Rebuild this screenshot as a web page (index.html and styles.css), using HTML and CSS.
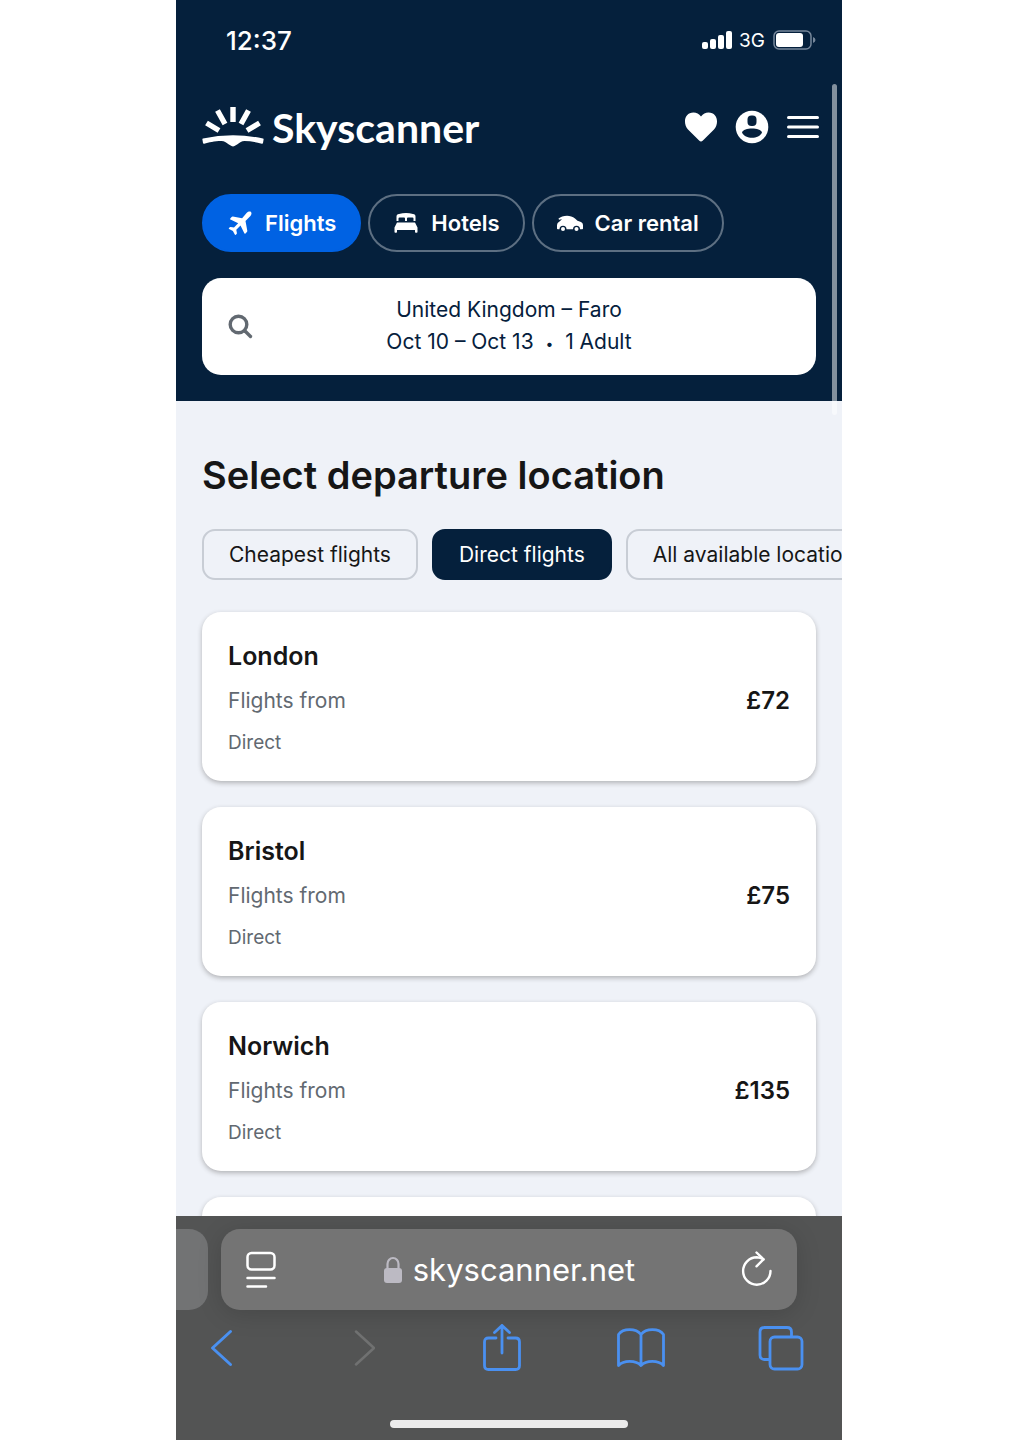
FILE: index.html
```html
<!DOCTYPE html>
<html lang="en">
<head>
    <meta charset="utf-8">
    <meta name="viewport" content="width=device-width, initial-scale=1">
    <title>Skyscanner</title>
    <link rel="stylesheet" href="styles.css">
</head>
<body>
<div class="phone">
    <div class="scroll-thumb"></div>
    <header class="header">
        <div class="status-bar">
            <span class="time">12:37</span>
            <div class="status-icons">
                <svg width="31" height="20" viewBox="0 0 31 20" fill="#fff">
                    <rect x="0" y="12" width="6" height="7" rx="2"/>
                    <rect x="8" y="9" width="6" height="10" rx="2"/>
                    <rect x="16" y="5" width="6" height="14" rx="2"/>
                    <rect x="24" y="1" width="6" height="18" rx="2"/>
                </svg>
                <span class="network">3G</span>
                <svg width="43" height="20" viewBox="0 0 43 20">
                    <rect x="1" y="1" width="37" height="18" rx="5" fill="none" stroke="#76869a" stroke-width="1.5"/>
                    <rect x="3" y="3" width="27" height="14" rx="3" fill="#fff"/>
                    <path d="M40 7q2.5 1 2.5 3T40 13z" fill="#76869a"/>
                </svg>
            </div>
        </div>

        <div class="brand-row">
            <a class="brand" href="#">
                <svg width="62" height="40" viewBox="0 0 62 40">
                    <path d="M31 0V15M15.500 3.500l7.500 13.500M46.500 3.500L39 17M4.500 16l12.500 7.500M57.500 16L45 23.500" stroke="#fff" stroke-width="5.400"/>
                    <path d="M1 31.500Q31 25 61 31.500q.8.200.6 1l-.6 3.500q-.2.900-1.200.700Q50 34 42.500 34c-3 0-4.500 1.500-7 3.200L32.500 39q-1.500.9-3 0l-3-1.800C24 35.500 22.500 34 19.500 34 12 34 7 35.500 2.200 36.700q-1 .2-1.200-.7l-.6-3.500q-.2-.8.6-1z" fill="#fff"/>
                </svg>
                <span class="brand-name">Skyscanner</span>
            </a>
            <div class="actions">
                <button class="icon-button" aria-label="Saved">
                    <svg width="34" height="34" viewBox="0 0 34 34" fill="#fff">
                        <path d="M17 31.500q-1 0-1.900-.9L4 19.500C-1.500 13 .6 2.500 9.500 2.500c3 0 5.500 1.500 7.500 4.100 2-2.600 4.500-4.100 7.500-4.100 8.900 0 11 10.500 5.500 17L18.900 30.600q-.9.900-1.900.9z"/>
                    </svg>
                </button>
                <button class="icon-button" aria-label="Account">
                    <svg width="34" height="34" viewBox="0 0 34 34">
                        <circle cx="17" cy="17" r="16.300" fill="#fff"/>
                        <rect x="12.500" y="5.500" width="9" height="10.500" rx="4" fill="#05203c"/>
                        <path d="M7 22.500c1.500-5.400 18.500-5.400 20 0-3 7-17 7-20 0z" fill="#05203c"/>
                    </svg>
                </button>
                <button class="icon-button" aria-label="Menu">
                    <svg width="34" height="34" viewBox="0 0 34 34" stroke="#fff" stroke-width="3" stroke-linecap="round">
                        <path d="M2.500 7.500h29M2.500 17h29M2.500 26.500h29"/>
                    </svg>
                </button>
            </div>
        </div>

        <nav class="pills">
            <a class="pill active" href="#">
                <svg width="26" height="26" viewBox="0 0 26 26" fill="#fff">
                    <path d="M24 2c1 1 .4 3-.8 4.200L18.500 11l1.800 9.800q.1.700-.4 1.200l-1.400 1.400q-.8.700-1.300-.3l-3.700-7.600-4.200 4.200.6 3.300q.1.500-.3.900l-.8.800q-.6.500-1-.2L5.900 20.900l-3.800-1.900q-.7-.4-.1-1l.8-.8q.4-.4.900-.3l3.300.6 4.200-4.200-7.700-3.700q-1-.5-.2-1.200l1.300-1.400q.6-.5 1.200-.4l9.300 1.700L19.800 2.800C21 1.600 23 1 24 2z"/>
                </svg>
                Flights
            </a>
            <a class="pill" href="#">
                <svg width="26" height="26" viewBox="0 0 26 26" fill="#fff">
                    <path d="M3.500 11V6.500Q3.500 4 6 4q7-1.800 14 0 2.500 0 2.500 2.500V11h-2V8.500q0-1-1-1h-4.500q-1 0-1 1V11h-2V8.500q0-1-1-1H6.500q-1 0-1 1V11z"/>
                    <path d="M4 12.500h18l2.500 5V22q0 .8-.8.800h-.9q-.8 0-.8-.8v-2H4v2q0 .8-.8.800h-.9q-.8 0-.8-.8v-4.500z"/>
                </svg>
                Hotels
            </a>
            <a class="pill" href="#">
                <svg width="26" height="26" viewBox="0 0 26 26" fill="#fff">
                    <path d="M1.500 8.500C5 5.500 13 4 18 8.500l2.500 2.300 3.500 1.200q2 .8 2 3v3.500q0 .7-.7.700H23a3.500 3.500 0 0 0-7 0H9.500a3.500 3.500 0 0 0-7 0H.800q-.8 0-.8-.7V15q0-2.500 2.500-3.500l2.500-2.300q-2 .2-3 .6z"/>
                    <circle cx="6" cy="19" r="2"/>
                    <circle cx="19.500" cy="19" r="2"/>
                </svg>
                Car rental
            </a>
        </nav>

        <button class="search">
            <svg width="26" height="26" viewBox="0 0 26 26" fill="none" stroke="#626971" stroke-width="3.400" stroke-linecap="round">
                <circle cx="10.500" cy="10.500" r="8.300"/>
                <path d="M17 17l5.500 5.500"/>
            </svg>
            <span class="search-text">
                <span>United Kingdom – Faro</span>
                <span>Oct 10 – Oct 13 &nbsp;<span class="dot">•</span>&nbsp; 1 Adult</span>
            </span>
        </button>
    </header>

    <main class="content">
        <h1>Select departure location</h1>
        <div class="chips">
            <button class="chip">Cheapest flights</button>
            <button class="chip selected">Direct flights</button>
            <button class="chip">All available locations</button>
        </div>
        <div class="cards">
            <a class="card" href="#">
                <h2>London</h2>
                <div class="fare"><span>Flights from</span><strong>£72</strong></div>
                <small>Direct</small>
            </a>
            <a class="card" href="#">
                <h2>Bristol</h2>
                <div class="fare"><span>Flights from</span><strong>£75</strong></div>
                <small>Direct</small>
            </a>
            <a class="card" href="#">
                <h2>Norwich</h2>
                <div class="fare"><span>Flights from</span><strong>£135</strong></div>
                <small>Direct</small>
            </a>
            <div class="card"></div>
        </div>
    </main>

    <footer class="browser">
        <div class="tabs">
            <div class="previous-tab"></div>
            <div class="address">
                <button class="icon-button" aria-label="Page settings">
                    <svg width="32" height="38" viewBox="0 0 32 38" fill="none" stroke="#fff" stroke-width="2.500" stroke-linecap="round">
                        <rect x="2.500" y="2" width="27" height="16.500" rx="4"/>
                        <path d="M2.500 27h27M2.500 35.500h18.500"/>
                    </svg>
                </button>
                <button class="url">
                    <svg width="20" height="28" viewBox="0 0 20 28">
                        <rect x="1" y="12" width="18" height="15" rx="3" fill="#bcbac3"/>
                        <path d="M4.500 13V8a5.500 6 0 0 1 11 0v5" fill="none" stroke="#bcbac3" stroke-width="2.200"/>
                    </svg>
                    skyscanner.net
                </button>
                <button class="icon-button" aria-label="Reload">
                    <svg width="32" height="38" viewBox="0 0 32 38" fill="none" stroke="#fff" stroke-width="2.400" stroke-linecap="round" stroke-linejoin="round">
                        <path d="M29.500 20a13.700 13.700 0 1 1-13.700-13.700q3.500.2 6.700 2"/>
                        <path d="M15.500 1.500l7 6.800-7 7"/>
                    </svg>
                </button>
            </div>
        </div>
        <nav class="toolbar">
            <button class="icon-button" aria-label="Back">
                <svg width="26" height="48" viewBox="0 0 26 48" fill="none" stroke="#4a90f0" stroke-width="3" stroke-linecap="round" stroke-linejoin="round"><path d="M21.500 7.500L3.500 24l18 16.500"/></svg>
            </button>
            <button class="icon-button" aria-label="Forward" disabled>
                <svg width="26" height="48" viewBox="0 0 26 48" fill="none" stroke="#707171" stroke-width="2.500" stroke-linecap="round" stroke-linejoin="round"><path d="M7 7.500L25 24 7 40.500"/></svg>
            </button>
            <button class="icon-button" aria-label="Share">
                <svg width="40" height="48" viewBox="0 0 40 48" fill="none" stroke="#4a90f0" stroke-width="2.800" stroke-linecap="round" stroke-linejoin="round"><path d="M14 14H6.500q-4 0-4 4v23.500q0 4 4 4h27q4 0 4-4V18q0-4-4-4H26M20 29V1.500M12.500 8.500L20 1.500l7.500 7"/></svg>
            </button>
            <button class="icon-button" aria-label="Bookmarks">
                <svg width="50" height="48" viewBox="0 0 50 48" fill="none" stroke="#4a90f0" stroke-width="2.800" stroke-linejoin="round"><path d="M25 10.500C20 4 7 4 2.500 10.500v31c5-5.500 17.500-5.500 22.500 0 5-5.500 17.500-5.500 22.500 0v-31C43 4 30 4 25 10.500zv31"/></svg>
            </button>
            <button class="icon-button" aria-label="Tabs">
                <svg width="46" height="48" viewBox="0 0 46 48" fill="none" stroke="#4a90f0" stroke-width="2.800"><rect x="12" y="13" width="32" height="32" rx="4.500"/><path d="M12 35.500H6.500q-4.500 0-4.500-4.500V8q0-4.500 4.500-4.500H29q4.500 0 4.500 4.500v5"/></svg>
            </button>
        </nav>
        <div class="home-indicator"></div>
    </footer>
</div>
</body>
</html>
```

FILE: styles.css
```css
* {
    box-sizing: border-box;
}
body {
    margin: 0;
    background: #fff;
    font-family: Inter, "Liberation Sans", sans-serif;
    color: #161616;
}
button {
    font-family: inherit;
    cursor: pointer;
}
a {
    color: inherit;
    text-decoration: none;
}
svg {
    display: block;
    flex-shrink: 0;
}
.phone {
    position: relative;
    display: flex;
    flex-direction: column;
    max-width: 666px;
    height: 100vh;
    margin: 0 auto;
    background: #eff2f8;
    overflow: hidden;
}
/* thin overlay scroll bar on the right edge */
.scroll-thumb {
    position: absolute;
    top: 84px;
    right: 5px;
    width: 5px;
    height: 331px;
    border-radius: 3px;
    background: rgba(255, 255, 255, 0.5);
}

/* header */
.header {
    padding: 0 26px 26px;
    background: #05203c;
    color: #fff;
}
.status-bar {
    display: flex;
    justify-content: space-between;
    align-items: center;
    height: 80px;
    padding-left: 24px;
}
.time {
    font-size: 26px;
    font-weight: 500;
}
.status-icons {
    display: flex;
    align-items: center;
    gap: 6px;
}
.network {
    font-size: 19px;
    margin-right: 2px;
}
.brand-row {
    display: flex;
    justify-content: space-between;
    align-items: center;
    height: 94px;
    margin-bottom: 20px;
}
.brand {
    display: flex;
    align-items: center;
    gap: 8px;
}
.brand-name {
    font-family: Lato, sans-serif;
    font-size: 41px;
    font-weight: 700;
}
.actions {
    display: flex;
    gap: 17px;
    margin-right: -4px;
}
.icon-button {
    padding: 0;
    border: none;
    background: none;
}
.pills {
    display: flex;
    gap: 7px;
    margin-bottom: 26px;
}
.pill {
    display: flex;
    align-items: center;
    gap: 12px;
    height: 58px;
    padding: 0 23px;
    border: 2px solid #5d6f82;
    border-radius: 29px;
    font-size: 22px;
    font-weight: 600;
}
.pill.active {
    background: #0062e3;
    border-color: #0062e3;
}
.search {
    display: flex;
    align-items: center;
    width: 100%;
    height: 97px;
    padding: 0 26px;
    border: none;
    border-radius: 19px;
    background: #fff;
    color: #05203c;
    font-size: 21px;
    line-height: 32px;
}
.search-text {
    display: flex;
    flex-direction: column;
    flex: 1;
    padding-right: 26px;
}
.dot {
    font-size: 14px;
}

/* departure list */
.content {
    flex: 1;
    min-height: 0;
    padding: 50px 0 0 26px;
    overflow: hidden;
}
h1 {
    margin: 0 0 30px;
    font-size: 38px;
    font-weight: 600;
    line-height: 48px;
}
.chips {
    display: flex;
    gap: 14px;
    margin-bottom: 32px;
    overflow: hidden;
}
.chip {
    flex-shrink: 0;
    height: 51px;
    padding: 0 25px;
    border: 2px solid #c8cdd5;
    border-radius: 13px;
    background: none;
    color: #161616;
    font-size: 21px;
}
.chip.selected {
    background: #05203c;
    border-color: #05203c;
    color: #fff;
}
.cards {
    display: flex;
    flex-direction: column;
    gap: 26px;
    padding-right: 26px;
}
.card {
    display: block;
    min-height: 169px;
    padding: 27px 26px 24px;
    border-radius: 19px;
    background: #fff;
    box-shadow: 0 2px 5px rgba(37, 32, 31, 0.3);
}
.card h2 {
    margin: 0 0 12px;
    font-size: 25px;
    font-weight: 600;
    line-height: 34px;
}
.fare {
    display: flex;
    justify-content: space-between;
    margin-bottom: 12px;
    color: #626971;
    font-size: 21px;
    line-height: 32px;
}
.fare strong {
    color: #161616;
    font-size: 24px;
    font-weight: 600;
}
.card small {
    display: block;
    color: #626971;
    font-size: 19px;
    line-height: 28px;
}

/* browser bars */
.browser {
    height: 224px;
    padding-top: 13px;
    background: #535454;
}
.tabs {
    display: flex;
    gap: 13px;
    height: 81px;
    padding-right: 45px;
}
.previous-tab {
    width: 32px;
    border-radius: 0 19px 19px 0;
    background: #727374;
}
.address {
    display: flex;
    flex: 1;
    justify-content: space-between;
    align-items: center;
    padding: 0 24px;
    border-radius: 19px;
    background: #747474;
    box-shadow: 0 4px 24px rgba(0, 0, 0, 0.15);
}
.url {
    display: flex;
    align-items: center;
    gap: 10px;
    padding: 0;
    border: none;
    background: none;
    color: #fff;
    font-size: 31px;
}
.toolbar {
    display: flex;
    justify-content: space-between;
    align-items: center;
    height: 76px;
    padding: 0 36px 0 21px;
}
.toolbar .icon-button {
    display: flex;
    justify-content: center;
    width: 50px;
}
.home-indicator {
    width: 238px;
    height: 8px;
    margin: 34px auto 0;
    border-radius: 4px;
    background: #ececec;
}
```
